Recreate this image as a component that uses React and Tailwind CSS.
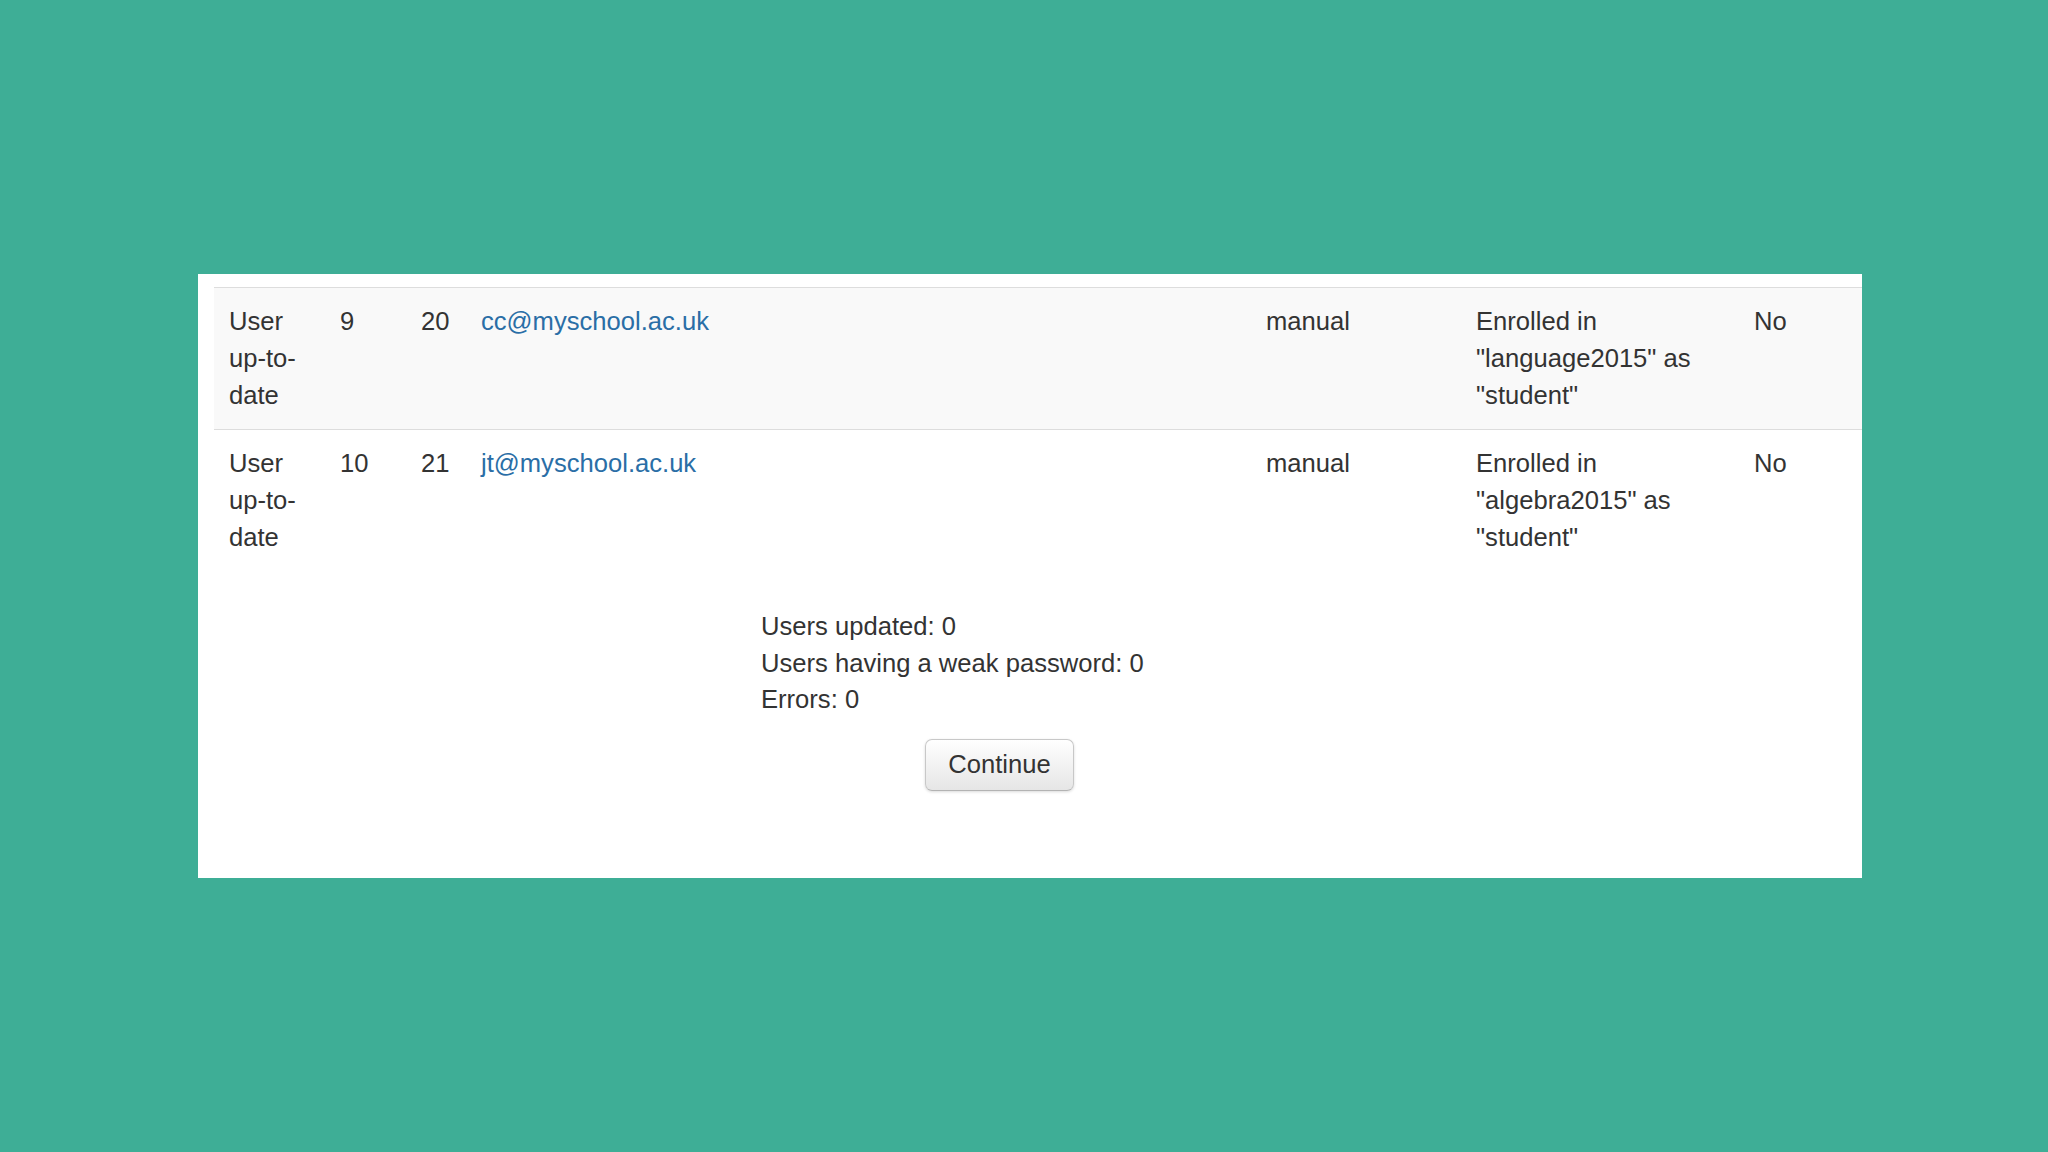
const rows = [
  {
    status: "User up-to-date",
    line: 9,
    id: 20,
    email: "cc@myschool.ac.uk",
    auth: "manual",
    enrol: 'Enrolled in "language2015" as "student"',
    suspended: "No",
  },
  {
    status: "User up-to-date",
    line: 10,
    id: 21,
    email: "jt@myschool.ac.uk",
    auth: "manual",
    enrol: 'Enrolled in "algebra2015" as "student"',
    suspended: "No",
  },
];

function ResultRow({ row, striped }) {
  return (
    <tr className={`border-t border-[#dddddd] leading-[37px] ${striped ? "bg-[#f9f9f9]" : "bg-white"}`}>
      <td className="px-[15px] py-[15px] align-top">{row.status}</td>
      <td className="px-[15px] py-[15px] align-top">{row.line}</td>
      <td className="px-[15px] py-[15px] align-top">{row.id}</td>
      <td className="px-[15px] py-[15px] align-top">
        <a href="#" className="text-[#2a6ea6]">
          {row.email}
        </a>
      </td>
      <td className="px-[15px] py-[15px] align-top">{row.auth}</td>
      <td className="px-[15px] py-[15px] align-top">{row.enrol}</td>
      <td className="px-[15px] py-[15px] align-top">{row.suspended}</td>
    </tr>
  );
}

export default function App() {
  return (
    <div className="w-[2048px] h-[1152px] bg-[#3eae96] pt-[274px] pl-[198px] font-['Liberation_Sans',Arial,sans-serif] text-[#333333] text-[25.6px] leading-[36.6px]">
      <div className="w-[1664px] h-[604px] bg-white pl-[16px] pt-[13px]">
        <table className="w-full table-fixed border-collapse">
          <colgroup>
            <col className="w-[111px]" />
            <col className="w-[81px]" />
            <col className="w-[60px]" />
            <col className="w-[785px]" />
            <col className="w-[210px]" />
            <col className="w-[278px]" />
            <col className="w-[123px]" />
          </colgroup>
          <tbody>
            {rows.map((row, i) => (
              <ResultRow key={row.id} row={row} striped={i % 2 === 0} />
            ))}
          </tbody>
        </table>

        <div className="ml-[547px] mt-[37px]">
          <div>Users updated: 0</div>
          <div>Users having a weak password: 0</div>
          <div>Errors: 0</div>
        </div>

        <button className="ml-[711px] mt-[21px] w-[149px] h-[52px] rounded-[7px] border border-[#c8c8c8] border-b-[#b3b3b3] bg-gradient-to-b from-white to-[#e6e6e6] shadow-[0_1px_3px_rgba(0,0,0,0.15)] text-[#333333]">
          Continue
        </button>
      </div>
    </div>
  );
}
